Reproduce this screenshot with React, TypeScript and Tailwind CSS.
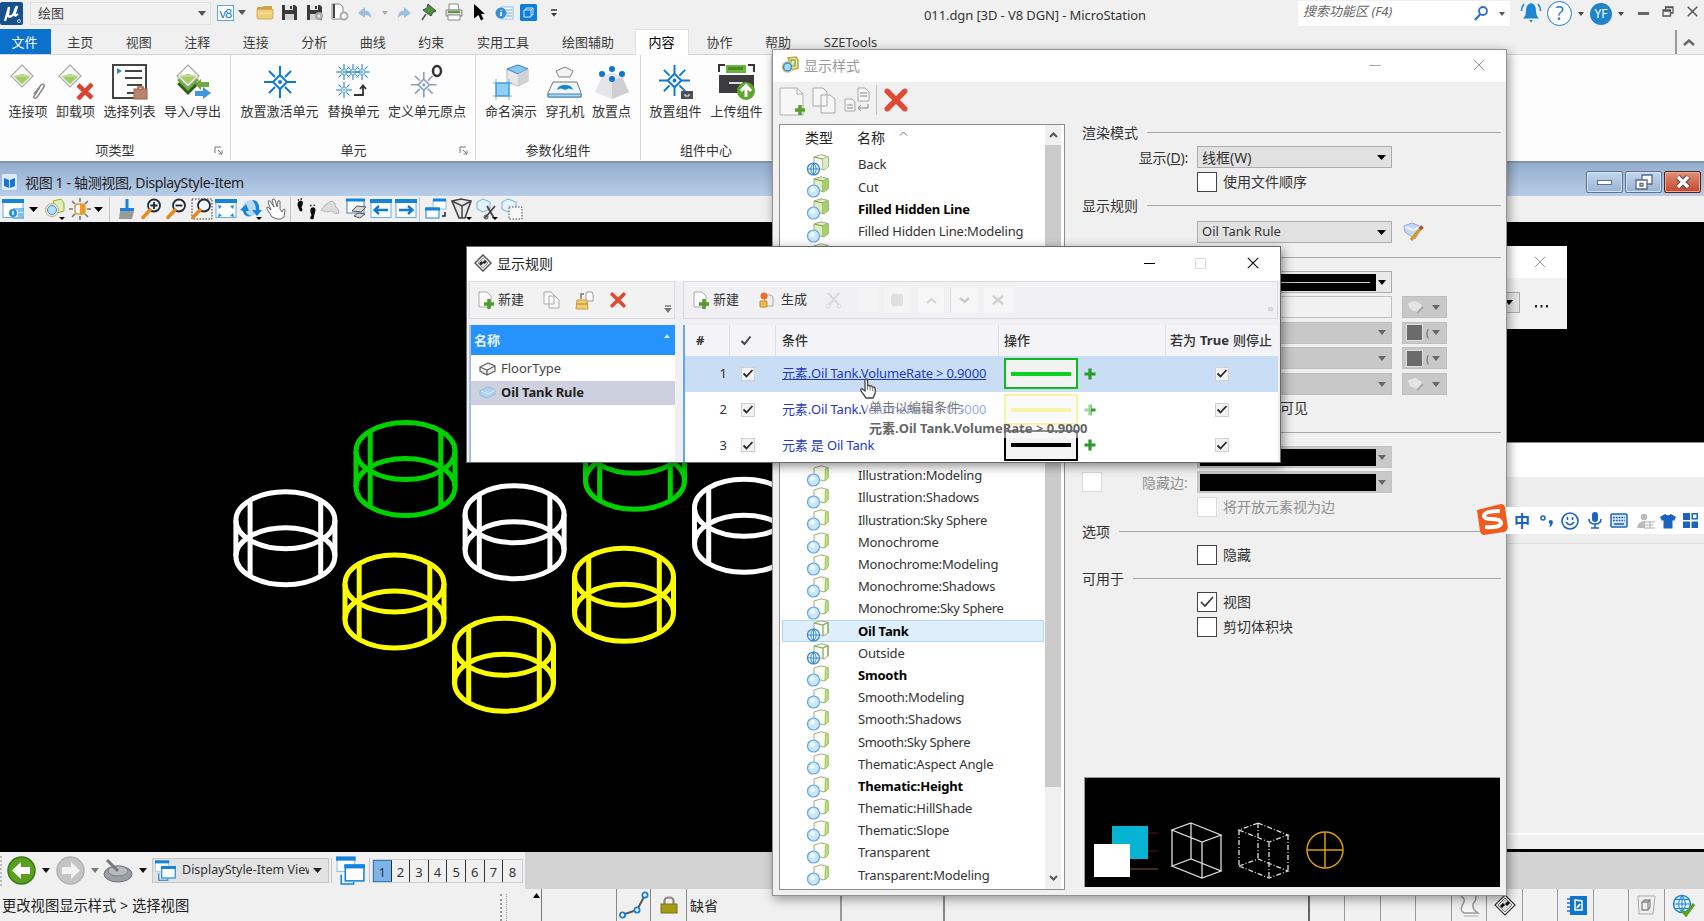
import React from 'react';

type Kids = { children?: React.ReactNode };

function Svg({ w, h, vb, c = '', children }: Kids & { w: number; h: number; vb?: string; c?: string }) {
  return (
    <svg width={w} height={h} viewBox={vb ?? `0 0 ${w} ${h}`} className={`block shrink-0 ${c}`} fill="none">
      {children}
    </svg>
  );
}

const Tri = ({ c = '', fill = '#555' }: { c?: string; fill?: string }) => (
  <Svg w={8} h={5} c={c}><path d="M0 0H8L4 5Z" fill={fill} /></Svg>
);

const TriBig = ({ c = '', fill = '#000' }: { c?: string; fill?: string }) => (
  <Svg w={9} h={5} c={c}><path d="M0 0H9L4.5 5Z" fill={fill} /></Svg>
);

const Close = ({ color, s = 12, c = '', sw = 1.2 }: { color: string; s?: number; c?: string; sw?: number }) => (
  <Svg w={s} h={s} vb="0 0 12 12" c={c}><path d="M.8 .8L11.2 11.2M11.2 .8L.8 11.2" stroke={color} strokeWidth={sw} /></Svg>
);

const RedX = ({ s, c = '' }: { s: number; c?: string }) => (
  <Svg w={s} h={s} vb="0 0 22 22" c={c}><path d="M3 3L19 19M19 3L3 19" stroke="#e04a34" strokeWidth="5" strokeLinecap="round" /></Svg>
);

/* ---------- Title bar ---------- */

const Floppy = ({ c = '', gear = false }: { c?: string; gear?: boolean }) => (
  <Svg w={17} h={17} c={c}>
    <path d="M1 1H14L16 3V16H1Z" fill="#3a3a3a" />
    <path d="M4 1H12V6H4Z" fill="#e8e8e8" />
    <path d="M4 10H13V16H4Z" fill="#d4d4d4" />
    <path d="M10 2V5" stroke="#3a3a3a" strokeWidth="2" />
    {gear && <><circle cx="13" cy="12" r="4" fill="#a8a8a8" /><circle cx="13" cy="12" r="1.5" fill="#eee" /></>}
  </Svg>
);

function TitleBar() {
  return (
    <div className="flex h-[29px] w-full items-start bg-[#f0f0f0]">
      <Svg w={23} h={23} c="mt-[2px]">
        <rect width="23" height="23" rx="2" fill="#17508c" />
        <path d="M5 19L9 5L8 12.500Q8 15 10.500 14.500Q13.500 14 15.500 7L17 4L14.600 12.500Q14.600 15 18 12" stroke="#fff" strokeWidth="2.300" />
        <circle cx="19" cy="19" r="1.500" stroke="#bcd7f0" />
      </Svg>
      <div className="ml-[7px] mt-[2px] flex h-[23px] w-[181px] items-center border border-[#e2e2e2] bg-[#f1f1f1] pl-[7px] text-[13px] text-[#444]">
        绘图<Tri c="ml-auto mr-[4px]" />
      </div>
      <div className="ml-[6px] mt-[5px] flex h-[16px] w-[17px] items-center justify-center border border-[#5aa7e4] bg-white text-[13px] leading-none tracking-[-1px] text-[#1a7fd4]">v8</div>
      <Tri c="ml-[4px] mt-[10px]" />
      <Svg w={18} h={15} c="ml-[10px] mt-[5px]">
        <path d="M1 3Q1 2 2 2H6L8 1H16V5H1Z" fill="#caa14c" /><path d="M1 4.500H17V12Q17 14 15.500 14H2.500Q1 14 1 12Z" fill="#efd07a" stroke="#d8ad4d" /><path d="M2 8H16" stroke="#f7e3a4" />
      </Svg>
      <Floppy c="ml-[7px] mt-[4px]" />
      <Floppy gear c="ml-[8px] mt-[4px]" />
      <Svg w={18} h={18} c="ml-[8px] mt-[3px]">
        <path d="M1 1H9L12 4V16H1Z" fill="#fff" stroke="#888" /><path d="M3 1V15" stroke="#444" strokeWidth="2" /><circle cx="13" cy="13" r="3.500" stroke="#aaa" strokeWidth="2" fill="#fff" />
      </Svg>
      <Svg w={14} h={12} c="ml-[9px] mt-[7px]"><path d="M0 6L7 0V3.500Q13 3.500 13 11Q11 8 7 8V11Z" fill="#9fbfdf" /></Svg>
      <Svg w={6} h={4} c="ml-[10px] mt-[11px]"><path d="M0 0H6L3 4Z" fill="#aaa" /></Svg>
      <Svg w={14} h={12} c="ml-[9px] mt-[7px]"><path d="M14 6L7 0V3.500Q1 3.500 1 11Q3 8 7 8V11Z" fill="#9fbfdf" /></Svg>
      <Svg w={16} h={18} c="ml-[10px] mt-[3px]">
        <path d="M7 1L15 8L12 9L10 13L2 7L6 5Z" fill="#4f8f3a" stroke="#3c4a3a" /><path d="M5 11L1 17" stroke="#555" strokeWidth="1.500" />
      </Svg>
      <Svg w={18} h={18} c="ml-[8px] mt-[3px]">
        <path d="M4 1H13L14 7H4Z" fill="#fff" stroke="#888" /><path d="M1 7H17V13H1Z" fill="#d8d8d8" stroke="#888" /><path d="M3 9H15" stroke="#5aa02c" strokeWidth="2" /><path d="M3 12H15V17H3Z" fill="#fff" stroke="#888" />
      </Svg>
      <Svg w={12} h={17} c="ml-[11px] mt-[4px]"><path d="M0 0L11 10H7L9.500 15L7 16.500L4.500 11L0 14.500Z" fill="#000" /></Svg>
      <Svg w={19} h={14} c="ml-[9px] mt-[6px]">
        <rect x="6" y="1" width="12" height="12" fill="#fff" stroke="#8dbfe8" /><path d="M11 4H17M11 7H17M11 10H17" stroke="#5aa0dc" /><circle cx="6" cy="7" r="5.500" fill="#3a8fd8" /><path d="M6 4V5M6 6V10" stroke="#fff" strokeWidth="1.600" />
      </Svg>
      <Svg w={17} h={17} c="ml-[6px] mt-[4px]">
        <rect width="17" height="17" rx="1.500" fill="#0f7edb" /><path d="M4 6H11V13H4ZM6 6V4H13V11H11M11 6L13 4" stroke="#cfe6fa" />
      </Svg>
      <Svg w={8} h={8} c="ml-[13px] mt-[9px]"><path d="M1 1H7" stroke="#333" strokeWidth="1.500" /><path d="M1 4H7L4 7.500Z" fill="#333" /></Svg>
      <div className="ml-[366px] mt-[4px] w-[232px] whitespace-nowrap text-[13px] leading-[22px] tracking-[-0.100px] text-[#333]">011.dgn [3D - V8 DGN] - MicroStation</div>
      <div className="ml-auto mt-[1px] flex h-[25px] w-[212px] items-center bg-white pl-[5px] text-[13px] italic text-[#666]">
        <span className="mb-[4px] whitespace-nowrap">搜索功能区 (F4)</span>
        <Svg w={14} h={15} c="ml-auto"><circle cx="9" cy="5" r="4" stroke="#2f6fc8" strokeWidth="1.800" /><path d="M6 8.500L1 14" stroke="#2f6fc8" strokeWidth="2.400" /></Svg>
        <Svg w={6} h={4} c="ml-[11px] mr-[5px]"><path d="M0 0H6L3 4Z" fill="#555" /></Svg>
      </div>
      <Svg w={22} h={21} c="ml-[10px] mt-[2px]">
        <path d="M11 1Q16 2 16 9Q16 14 19 16.500H3Q6 14 6 9Q6 2 11 1Z" fill="#1f86cf" /><path d="M9 18H13L11 20.500Z" fill="#1f86cf" /><path d="M4 2Q1.500 5 1.500 9M18 2Q20.500 5 20.500 9" stroke="#1f86cf" strokeWidth="1.600" />
      </Svg>
      <div className="ml-[5px] mt-[1px] flex h-[25px] w-[25px] items-center justify-center rounded-full border-[1.5px] border-[#1f80c8] bg-white text-[19px] leading-none text-[#1f80c8]">?</div>
      <Svg w={6} h={4} c="ml-[6px] mt-[12px]"><path d="M0 0H6L3 4Z" fill="#444" /></Svg>
      <div className="ml-[6px] mt-[3px] flex h-[22px] w-[22px] items-center justify-center rounded-full bg-[#1f84cc] text-[12px] leading-none text-white">YF</div>
      <Svg w={6} h={4} c="ml-[6px] mt-[12px]"><path d="M0 0H6L3 4Z" fill="#444" /></Svg>
      <div className="ml-[14px] mt-[12px] h-[3px] w-[11px] bg-[#666]" />
      <Svg w={12} h={11} c="ml-[13px] mt-[6px]"><path d="M1 4H8.500V10H1ZM1 5H8.500M3.500 4V1H11V7H8.500M3.500 1.500H11" stroke="#555" strokeWidth="1.300" /></Svg>
      <Close color="#555" s={11} sw={1.600} c="ml-[13px] mr-[6px] mt-[6px]" />
    </div>
  );
}

/* ---------- Ribbon ---------- */

const tabs: [string, string][] = [
  ['主页', 'w-[58.500px]'], ['视图', 'w-[58.500px]'], ['注释', 'w-[58.500px]'], ['连接', 'w-[58.500px]'],
  ['分析', 'w-[58.500px]'], ['曲线', 'w-[58.500px]'], ['约束', 'w-[58.500px]'], ['实用工具', 'w-[85px]'], ['绘图辅助', 'w-[85px]'],
];

function Tabs() {
  return (
    <div className="flex h-[26px] w-full items-stretch border-b border-[#d4d4d4] bg-[#f0f0f0] text-[13px] leading-[27px] text-[#3c3c3c]">
      <div className="w-[51px] bg-[#0a72cc] pr-[2px] text-center text-white">文件</div>
      {tabs.map(([t, w]) => <div key={t} className={`${w} text-center`}>{t}</div>)}
      <div className="-mb-px ml-[4px] w-[54px] border-x border-t border-[#e0e0e0] bg-white text-center leading-[25px] text-black">内容</div>
      <div className="ml-[2px] w-[58px] text-center">协作</div>
      <div className="w-[59px] text-center">帮助</div>
      <div className="w-[86px] text-center text-[13px]">SZETools</div>
      <div className="ml-auto mt-[1px] flex h-[24px] w-[29px] items-center justify-center border-l-2 border-[#999] pr-[4px]">
        <Svg w={12} h={7}><path d="M1 6L6 1.500L11 6" stroke="#666" strokeWidth="2.400" /></Svg>
      </div>
    </div>
  );
}

const Diamond = () => (
  <>
    <path d="M12 1L23 12L12 23L1 12Z" fill="#fbfbfb" stroke="#a8a8a8" strokeWidth="1.200" />
    <path d="M3.500 12L12 10L20.500 12L12 20.500Z" fill="#a3cd68" /><path d="M3.500 12H20.500" stroke="#d6e9b8" />
  </>
);

const Cell = ({ x = 0, y = 0, k = 1, color = '#0f7ad4' }: { x?: number; y?: number; k?: number; color?: string }) => (
  <g transform={`translate(${x} ${y}) scale(${k})`} stroke={color} strokeWidth={2}>
    <path d="M16 9L23 16L16 23L9 16Z" /><path d="M16 0V9M16 23V32M0 16H9M23 16H32M5 5L11 11M27 5L21 11M5 27L11 21M27 27L21 21" />
    <circle cx="16" cy="16" r="1" />
  </g>
);

function RBtn({ label, c, children }: Kids & { label: string; c: string }) {
  return (
    <div className={`flex flex-col items-center ${c}`}>
      <div className="flex h-[40px] items-center justify-center">{children}</div>
      <div className="whitespace-nowrap text-[13px] leading-[18px]">{label}</div>
    </div>
  );
}

function Group({ label, c, corner, children }: Kids & { label: string; c: string; corner?: boolean }) {
  return (
    <div className={`flex h-[105px] flex-col border-r border-[#d5d5d5] ${c}`}>
      <div className="flex pt-[7px]">{children}</div>
      <div className="mt-auto flex h-[18px] items-center text-[13px]">
        <div className="flex-1 pl-[12px] text-center">{label}</div>
        <div className="w-[16px]">
          {corner && <Svg w={9} h={9} c="-mt-[2px]"><path d="M1 7V1H7M4 4L8 8M8 4.500V8H4.500" stroke="#777" /></Svg>}
        </div>
      </div>
    </div>
  );
}

function Ribbon() {
  return (
    <div className="flex h-[108px] w-full border-b-2 border-[#8494a8] bg-[#fdfdfd] text-[#333]">
      <Group label="项类型" c="w-[231px] pl-[4px]" corner>
        <RBtn label="连接项" c="w-[48px]">
          <Svg w={36} h={36}><Diamond /><path d="M24 30L31 21Q34 19 34.500 22L28 32Q25 36 23.500 33L30 23" stroke="#8a8a8a" strokeWidth="1.500" /></Svg>
        </RBtn>
        <RBtn label="卸载项" c="w-[47px]">
          <Svg w={36} h={36}><Diamond /><path d="M20 21L34 34M34 20L20 35" stroke="#dc4232" strokeWidth="4.500" /></Svg>
        </RBtn>
        <RBtn label="选择列表" c="w-[61px]">
          <Svg w={36} h={36}>
            <rect x="1" y="1" width="33" height="33" fill="#fff" stroke="#444" strokeWidth="2" /><path d="M5 4L10 7L5 10Z" fill="#2f86d6" />
            <path d="M13 7H30M13 14H30M15 21H30M15 29H22" stroke="#444" strokeWidth="1.800" /><rect x="22" y="25" width="13" height="10" fill="#b98468" stroke="#99614a" /><path d="M26 25V23H31V25" stroke="#99614a" strokeWidth="1.500" />
          </Svg>
        </RBtn>
        <RBtn label="导入/导出" c="w-[65px]">
          <Svg w={36} h={36}>
            <path d="M2 20L13 31L24 20L13 12Z" fill="#315b1e" /><path d="M2 16L13 27L24 16L13 8Z" fill="#6fae35" /><g transform="translate(1 0)"><Diamond /></g>
            <path d="M20 20L26 15V18H34V23H26V26Z" fill="#70a840" /><path d="M36 29L28 23V27H20V32H28V35Z" fill="#3d96de" />
          </Svg>
        </RBtn>
      </Group>
      <Group label="单元" c="w-[245px] pl-[5px]" corner>
        <RBtn label="放置激活单元" c="w-[87px]"><Svg w={32} h={32}><Cell /></Svg></RBtn>
        <RBtn label="替换单元" c="w-[61px]">
          <Svg w={36} h={36}>
            <Cell x={0} y={0} k={0.5} /><Cell x={9} y={0} k={0.5} /><Cell x={18} y={0} k={0.5} /><Cell x={0} y={18} k={0.5} />
            <path d="M18 31H27V22M24 25L27 21.500L30 25" stroke="#333" strokeWidth="1.800" />
          </Svg>
        </RBtn>
        <RBtn label="定义单元原点" c="w-[86px]">
          <Svg w={36} h={36}><Cell x={2} y={8} k={0.8} color="#8d9dbe" /><ellipse cx="28" cy="7" rx="4" ry="5" stroke="#333" strokeWidth="2.500" /></Svg>
        </RBtn>
      </Group>
      <Group label="参数化组件" c="w-[165px] pl-[4px]">
        <RBtn label="命名演示" c="w-[62px]">
          <Svg w={36} h={36}>
            <path d="M14 5L25 1L35 5V17L25 22L14 18Z" fill="#e8e8ea" stroke="#b8b8b8" /><path d="M14 5L25 1L35 5L25 10Z" fill="#86c6f2" stroke="#3b86bd" /><path d="M25 10L35 5V17L25 22Z" fill="#d2d2d5" />
            <rect x="3" y="19" width="13" height="13" fill="#8fd0fa" stroke="#2f86c8" /><path d="M3 15V36M16 15V36M0 19H19M0 32H19" stroke="#4f9fd6" strokeWidth=".8" />
          </Svg>
        </RBtn>
        <RBtn label="穿孔机" c="w-[46px]">
          <Svg w={36} h={36}>
            <path d="M9 7L18 3L26 7L23 13H12Z" fill="#f4f4f4" stroke="#7c8288" /><path d="M6 18H30L34 29V33H1V29Z" fill="#f3f6f8" stroke="#6d7780" /><path d="M1 30H34V33H1Z" fill="#a9d6f5" stroke="#3a84ba" />
            <path d="M10 26Q11 21 18 21Q25 21 26 26Q22 23 18 26Q14 23 10 26Z" fill="#1684d4" />
          </Svg>
        </RBtn>
        <RBtn label="放置点" c="w-[47px]">
          <Svg w={36} h={36}>
            <path d="M8 13L18 8L28 13L35 28L18 35L1 28Z" fill="#e6e6e8" /><path d="M18 17L28 13L35 28L18 35Z" fill="#cfcfd2" />
            <g fill="#0e76d0"><circle cx="18" cy="5" r="3" /><circle cx="8" cy="10" r="3" /><circle cx="28" cy="10" r="3" /><circle cx="18" cy="15" r="3" /></g>
          </Svg>
        </RBtn>
      </Group>
      <Group label="组件中心" c="w-[131px] pl-[4px]">
        <RBtn label="放置组件" c="w-[61px]">
          <Svg w={36} h={36}><Cell x={1} y={1} k={0.97} /><rect x="23" y="27" width="12" height="8" fill="#4a4f58" /><path d="M27 30V32H31V30" stroke="#fff" /></Svg>
        </RBtn>
        <RBtn label="上传组件" c="w-[61px]">
          <Svg w={37} h={37}>
            <path d="M1 8V1H7M30 1H36V8" stroke="#333" strokeWidth="2" /><path d="M8 1H28V9H8Z" fill="#6db33f" /><path d="M10 3H25V6H10Z" fill="#4b8a28" />
            <path d="M1 11H36V29H1Z" fill="#3c3c3e" /><path d="M11 19H24L26 22" stroke="#ddd" strokeWidth="1.800" />
            <circle cx="28" cy="27" r="9" fill="#5fa52a" /><path d="M28 33V22M23 27L28 21.500L33 27" stroke="#fff" strokeWidth="3" />
          </Svg>
        </RBtn>
      </Group>
    </div>
  );
}

/* ---------- 3D view ---------- */

const Win = ({ children }: Kids) => (
  <><rect x="1" y="1.500" width="20" height="18" fill="#fff" stroke="#64ace6" /><path d="M0 1H22V5H0Z" fill="#1384dd" />{children}</>
);

const Mag = ({ sign }: { sign: string }) => (
  <><circle cx="13" cy="7.500" r="6" fill="#f2f6fa" stroke="#222b38" strokeWidth="1.800" /><path d="M9 12L2 19.500" stroke="#e38b25" strokeWidth="3.500" strokeLinecap="round" /><path d={sign} stroke="#222" strokeWidth="1.800" /></>
);

const Sep = ({ c }: { c: string }) => <div className={`h-[25px] w-px shrink-0 bg-[#c4c4c4] ${c}`} />;

function ViewTools() {
  return (
    <div className="flex h-[26px] w-full items-center bg-[#f0f0f0]">
      <Svg w={22} h={22} c="ml-[2px]"><Win><path d="M11 11H22V20H11Z" fill="#e5f3fd" stroke="#1f86d8" /><path d="M16 13H21M16 16H21M16 18H21" stroke="#1f86d8" /><circle cx="11" cy="15" r="4" fill="#2e90dd" /><path d="M11 13V17" stroke="#fff" strokeWidth="1.500" /></Win></Svg>
      <TriBig c="ml-[5px]" />
      <Svg w={22} h={22} c="ml-[6px]"><path d="M9 3L17 1L20 5V13L13 15Z" fill="#e2eeb9" stroke="#85b52c" /><circle cx="8" cy="12" r="6.500" fill="#dff2ff" stroke="#e0a352" /><circle cx="8" cy="12" r="4.500" fill="#b5defa" stroke="#3b8fd2" /><path d="M15 19H21L18 22Z" fill="#000" /></Svg>
      <Svg w={22} h={22} c="ml-[3px]"><rect x="6" y="6" width="10" height="10" rx="3" fill="#fff" stroke="#d89a44" strokeWidth="1.500" /><path d="M11 6H16V15L11 17Z" fill="#f29a1f" /><path d="M11 0V4M11 18V22M0 11H4M18 11H22M3 3L6 6M19 3L16 6M3 19L6 16M19 19L16 16" stroke="#777" strokeWidth="1.600" /></Svg>
      <TriBig c="ml-[3px]" />
      <Sep c="ml-[6px]" />
      <Svg w={18} h={22} c="ml-[8px]"><path d="M9 1V11M2 11.500H16" stroke="#1684dc" strokeWidth="3" /><path d="M2 13H16L14 21H1Z" fill="#9a9a9a" /></Svg>
      <Svg w={22} h={22} c="ml-[5px]"><Mag sign="M9.500 7.500H16.500M13 4V11" /></Svg>
      <Svg w={22} h={22} c="ml-[3px]"><Mag sign="M9.500 7.500H16.500" /></Svg>
      <Svg w={22} h={22} c="ml-[3px]"><rect x="1" y="1" width="20" height="20" stroke="#333" strokeDasharray="1.500 1.500" /><Mag sign="M0 0" /></Svg>
      <Svg w={22} h={22} c="ml-[2px]"><Win><path d="M3 7L7 8L4 11ZM19 7L15 8L18 11ZM3 19L7 18L4 15ZM19 19L15 18L18 15Z" fill="#2a8ad8" /></Win></Svg>
      <Svg w={22} h={22} c="ml-[3px]"><circle cx="11" cy="10" r="8" fill="#b9d9f3" /><path d="M0 12L6 6L9 13H6Q6 17 12 18Q4 20 3 13ZM12 2Q20 2 19 12H22L17 18L12 12H16Q16 6 12 2Z" fill="#1584dc" /><path d="M16 19H22L19 22Z" fill="#000" /></Svg>
      <Svg w={22} h={22} c="ml-[3px]"><path d="M7 19L2 11Q1 9 3 9L6 12L3 4Q3 2 5 3L9 9L7 2Q8 0 10 2L12 9L13 3Q15 2 15 4V11L17 14Q19 9 20 12L19 19Q16 22 12 21Z" fill="#fff" stroke="#666" /></Svg>
      <Sep c="ml-[3px]" />
      <Svg w={24} h={22} c="ml-[3px]">
        <path d="M4 4Q7 1 9 4Q9 7 7.500 9L8.500 12Q7.500 14.500 5.500 12.500L4 9Q3 7 4 4ZM17 10Q20 8 21.500 11Q21.500 14 20.500 16L19.500 21Q17 22 16 20L17.500 17Q15.500 13 17 10Z" fill="#0a0a0a" />
        <path d="M4 2.500L5 1.500M6.500 1H8M16 8L17.500 7M19.500 7L21 7.500" stroke="#0a0a0a" strokeWidth="1.300" />
      </Svg>
      <Svg w={22} h={22} c="ml-[2px]"><path d="M1 12Q5 6 11 3Q16 4 15 8Q19 10 19 15Q15 17 12 13Q6 15 1 12Z" fill="#dcdcdc" stroke="#b4b4b4" /></Svg>
      <Svg w={22} h={22} c="ml-[3px]"><rect x="2" y="2" width="17" height="13" fill="#fff" stroke="#3d7fc0" /><path d="M1 2H20" stroke="#1384dd" strokeWidth="3" /><path d="M7 13L12 8L21 9L16 14ZM9 18L13 15L20 16L15 20Z" fill="#d8d8d8" stroke="#555" /></Svg>
      <Svg w={22} h={22} c="ml-[3px]"><Win><path d="M4 12H18M9 8L4.500 12L9 16" stroke="#0f7ad4" strokeWidth="2.400" /></Win></Svg>
      <Svg w={22} h={22} c="ml-[3px]"><Win><path d="M4 12H18M13 8L17.500 12L13 16" stroke="#0f7ad4" strokeWidth="2.400" /></Win></Svg>
      <Sep c="ml-[2px]" />
      <Svg w={22} h={22} c="ml-[5px]"><rect x="8" y="2" width="13" height="9" fill="#fff" stroke="#8cc4ef" /><path d="M8 2H21" stroke="#1384dd" strokeWidth="3" /><rect x="1" y="10" width="13" height="10" fill="#fff" stroke="#1384dd" /><path d="M0 11H15" stroke="#1384dd" strokeWidth="3" /><path d="M20 14V18H17" stroke="#222" strokeWidth="1.500" /></Svg>
      <Svg w={22} h={22} c="ml-[4px]"><path d="M1 3L10 1L20 3L14 20H8Z" fill="#e8e8e8" stroke="#444" strokeWidth="1.600" /><path d="M1 3L11 8L20 3M11 8V20" stroke="#444" strokeWidth="1.500" /><path d="M15 19H21L18 22Z" fill="#000" /></Svg>
      <Svg w={22} h={22} c="ml-[3px]"><path d="M1 4L7 1L14 4V11L7 14L1 11Z" fill="#e6f3fc" stroke="#6fb1e2" /><path d="M9 20L19 8M11 8L18 20" stroke="#444" strokeWidth="1.800" /><circle cx="10" cy="19" r="2" stroke="#444" /><path d="M16 19H22L19 22Z" fill="#000" /></Svg>
      <Svg w={22} h={22} c="ml-[3px]"><path d="M1 4L7 1L15 4V11L7 14L1 11Z" fill="#e6f3fc" stroke="#6fb1e2" /><rect x="8" y="9" width="13" height="12" fill="#f6f6f6" stroke="#444" strokeDasharray="1.500 1.500" /></Svg>
    </div>
  );
}

const tanks: [number, number, string][] = [
  [405.500, 247, '#00d200'], [635, 240.800, '#00d200'], [285.400, 316.300, '#fff'], [514.600, 310.200, '#fff'],
  [744, 303.800, '#fff'], [394.500, 379.500, '#fafa00'], [624, 372.800, '#fafa00'], [504, 442.700, '#fafa00'],
];

function View() {
  return (
    <div className="flex w-full flex-col">
      <div className="flex h-[33px] w-full items-center bg-linear-to-b from-[#94aece] to-[#b7cde8] text-[14px] text-[#222]">
        <Svg w={15} h={16} c="ml-[2px] mt-[5px]"><rect width="15" height="16" rx="2" fill="#dbe9f8" /><path d="M2 4L7 6V14L2 12ZM8 6L13 4V12L8 14Z" fill="#1677d2" /></Svg>
        <div className="ml-[8px] mt-[6px] whitespace-nowrap text-[14px] tracking-[-0.350px]">视图 1 - 轴测视图, DisplayStyle-Item</div>
        <div className="ml-auto mr-[3px] mt-[5px] flex gap-[2px]">
          <div className="flex h-[22px] w-[37px] items-center justify-center rounded-[2px] border border-[#5d7390] bg-linear-to-b from-[#c3d6ec] to-[#98b4d6] shadow-[inset_0_0_0_1px_#d5e2f1]">
            <div className="h-[5px] w-[15px] border border-[#5c6f88] bg-white" />
          </div>
          <div className="flex h-[22px] w-[37px] items-center justify-center rounded-[2px] border border-[#5d7390] bg-linear-to-b from-[#c3d6ec] to-[#98b4d6] shadow-[inset_0_0_0_1px_#d5e2f1]">
            <Svg w={18} h={16}><path d="M7 1H17V10H7Z" fill="#fff" stroke="#56687f" strokeWidth="1.300" /><path d="M1 6H12V15H1Z" fill="#fff" stroke="#56687f" strokeWidth="1.300" /><path d="M5 9.500H8V12H5Z" stroke="#56687f" strokeWidth="1.300" /></Svg>
          </div>
          <div className="flex h-[22px] w-[37px] items-center justify-center rounded-[2px] border border-[#53241b] bg-linear-to-b from-[#dd9078] to-[#c4452a] shadow-[inset_0_0_0_1px_#e9ab98]">
            <Svg w={16} h={14}><path d="M3 2L13 12M13 2L3 12" stroke="#5b4a48" strokeWidth="5.500" /><path d="M3 2L13 12M13 2L3 12" stroke="#fff" strokeWidth="3.200" /></Svg>
          </div>
        </div>
      </div>
      <ViewTools />
      <div className="h-[630px] w-full bg-black">
        <Svg w={773} h={630}>
          {tanks.map(([x, y, color]) => (
            <g key={`${x}`} transform={`translate(${x} ${y})`} stroke={color} strokeWidth="5">
              <ellipse cy="-18" rx="49.500" ry="28.500" /><ellipse cy="18" rx="49.500" ry="28.500" />
              <path d="M-49.500 -18V18M49.500 -18V18M-35.300 -38V38M35.300 -38V38" />
            </g>
          ))}
        </Svg>
      </div>
    </div>
  );
}

/* ---------- Bottom bars ---------- */

const Wins = ({ s }: { s: number }) => (
  <Svg w={s} h={s} vb="0 0 28 28">
    <rect x="1" y="1" width="17" height="14" fill="#fff" stroke="#8cc4ef" /><path d="M0 2.500H19" stroke="#1384dd" strokeWidth="4" />
    <rect x="9" y="9" width="18" height="15" fill="#fff" stroke="#1384dd" strokeWidth="1.500" /><path d="M8 10H28" stroke="#1384dd" strokeWidth="4" /><path d="M5 18V27H17V25" stroke="#1384dd" strokeWidth="1.500" />
  </Svg>
);

function NavBar() {
  return (
    <div className="flex h-[37px] w-full bg-[#d3d3d4]">
      <div className="flex h-full w-[525px] items-center bg-[#f0f0f0] text-[13px] text-[#333]">
        <div className="h-[30px] border-l-2 border-dotted border-[#bbb]" />
        <Svg w={29} h={29} c="ml-[5px]"><circle cx="14.500" cy="14.500" r="13.500" fill="#58a01d" stroke="#38761a" strokeWidth="1.500" /><path d="M5 14.500L14 6V11H23V18H14V23Z" fill="#fff" /></Svg>
        <Tri c="ml-[6px]" fill="#111" />
        <Svg w={29} h={29} c="ml-[6px]"><circle cx="14.500" cy="14.500" r="13.500" fill="#c4c4c4" stroke="#b2b2b2" strokeWidth="1.500" /><path d="M24 14.500L15 6V11H6V18H15V23Z" fill="#f2f2f2" /></Svg>
        <Tri c="ml-[6px]" fill="#777" />
        <Svg w={30} h={24} c="ml-[4px]"><ellipse cx="15" cy="15" rx="14" ry="8" fill="#9a9fa6" stroke="#6e737a" /><ellipse cx="15" cy="12" rx="10" ry="5" fill="#b7bcc2" stroke="#7b8087" /><path d="M4 1L15 12" stroke="#777" strokeWidth="3" /></Svg>
        <Tri c="ml-[6px]" fill="#111" />
        <div className="ml-[5px] flex h-[25px] w-[177px] items-center border border-[#c6c6c6] bg-[#e2e2e2] pl-[2px]">
          <Wins s={21} />
          <div className="ml-[6px] w-[127px] overflow-hidden whitespace-nowrap text-[12.500px]">DisplayStyle-Item View</div>
          <TriBig c="ml-auto mr-[6px]" fill="#222" />
        </div>
        <Sep c="ml-[2px]" />
        <div className="ml-[4px]"><Wins s={29} /></div>
        <Sep c="ml-[4px]" />
        <div className="ml-[2px] flex h-[24px] border border-[#ccc] text-[13px] leading-[24px]">
          {['1', '2', '3', '4', '5', '6', '7', '8'].map((n) => (
            <div key={n} className={`w-[18.600px] text-center ${n === '1' ? 'border border-[#3f78b4] bg-[#7cb3e8] leading-[22px]' : ''} ${n === '8' ? '' : 'border-r border-r-[#333]'}`}>{n}</div>
          ))}
        </div>
      </div>
    </div>
  );
}

function StatusBar() {
  return (
    <div className="flex h-[32px] w-full items-stretch bg-[#f0f0f0] text-[13px] text-[#222]">
      <div className="w-[500px] whitespace-nowrap pl-[2px] text-[14.300px] leading-[34px]">更改视图显示样式 &gt; 选择视图</div>
      <div className="mt-[5px] w-[7px] border-l-2 border-r border-dotted border-l-[#999] border-r-[#999]" />
      <div className="flex w-[35px] justify-end border-r border-[#777] pt-[4px]"><Svg w={7} h={5} c="mr-px"><path d="M0 5H7L3.500 0Z" fill="#000" /></Svg></div>
      <div className="w-[75px] border-r border-[#888]" />
      <div className="flex w-[34px] items-center justify-center border-r border-[#888]">
        <Svg w={30} h={28}><path d="M3 24L18 19L26 4" stroke="#555" strokeWidth="2" /><g fill="#fff" stroke="#1a80d4" strokeWidth="1.800"><circle cx="3.500" cy="24" r="2.600" /><circle cx="18" cy="19" r="2.600" /><circle cx="26" cy="4" r="2.600" /></g></Svg>
      </div>
      <div className="flex w-[36px] items-center justify-center border-r border-[#888]">
        <Svg w={18} h={18}><path d="M4.500 9V5Q4.500 1.500 9 1.500Q13.500 1.500 13.500 5V9" stroke="#888" strokeWidth="2.200" /><rect x="1" y="8" width="16" height="9" fill="#a79a14" stroke="#7c730e" /></Svg>
      </div>
      <div className="pl-[3px] text-[14px] leading-[34px]">缺省</div>
      <div className="ml-auto flex">
        <div className="w-[105px] border-l-2 border-r-2 border-l-[#999] border-r-[#888]" />
        <div className="w-[363px]" />
        <div className="w-[36px] border-l-2 border-[#666]" />
        <div className="w-[36px] border-l border-[#999]" />
        <div className="w-[35px] border-l border-[#999]" />
        <div className="w-[36px] border-l border-[#999]" />
        <div className="flex w-[35px] items-center justify-center border-l border-[#999]">
          <Svg w={22} h={24}><path d="M2 1H17Q20 5 15 11Q14 16 20 20H6Q1 17 5 11Q8 6 4 4Z" fill="#f6f6f6" stroke="#999" strokeWidth="1.500" /><path d="M6 23H20" stroke="#aaa" /></Svg>
        </div>
        <div className="flex w-[36px] items-center justify-center border-l border-[#999]">
          <Svg w={22} h={22}><path d="M11 1L21 11L11 21L1 11Z" fill="#fff" stroke="#333" strokeWidth="1.200" /><path d="M11 4L18 11L11 18L4 11Z" fill="#ddd" stroke="#777" /><path d="M7 13L10 10M12 11L15 8" stroke="#111" strokeWidth="3" /></Svg>
        </div>
        <div className="w-[35px] border-l border-[#999]" />
        <div className="flex w-[36px] items-center justify-center border-l border-[#999] pl-[4px]">
          <Svg w={21} h={21}><rect x="3" y="1" width="17" height="19" fill="#0e74cc" /><path d="M0 4H6M0 8H6M0 12H6M0 16H6" stroke="#0e74cc" strokeWidth="1.500" /><path d="M8 5L15 6V15H8Z" stroke="#fff" strokeWidth="1.500" /><path d="M10 13L13 9" stroke="#fff" strokeWidth="2" /></Svg>
        </div>
        <div className="w-[35px] border-l border-[#999]" />
        <div className="flex w-[36px] items-center justify-center border-l border-[#999]">
          <Svg w={19} h={20}><path d="M1 1H18L16 19H2Z" fill="#eee" stroke="#aaa" /><path d="M5 7L8 5H13V12L11 15H5ZM5 7H11V15M11 7L13 5" stroke="#888" strokeWidth="1.300" /></Svg>
        </div>
        <div className="flex w-[40px] items-center border-l border-[#999] pl-[7px]">
          <Svg w={23} h={23}><circle cx="10" cy="10" r="8.500" fill="#e5f3fd" stroke="#1a82d4" strokeWidth="1.500" /><path d="M1.500 10H18.500M10 1.500V18.500M3 5.500H17M3 14.500H17M10 1.500Q3 10 10 18.500M10 1.500Q17 10 10 18.500" stroke="#1a82d4" /><path d="M10 16L14 21L22 10" stroke="#5a9f1f" strokeWidth="3" /></Svg>
        </div>
      </div>
    </div>
  );
}

/* ---------- Display style dialog ---------- */

type Kind = 'globe' | 'green' | 'wire' | 'plain';

const StyleIcon = ({ kind }: { kind: Kind }) => (
  <Svg w={22} h={22}>
    <path d="M7 3L14 .8L21 2.500V13L17 16L7 13Z" fill={kind === 'green' ? '#e0edc0' : '#fbfdf4'} stroke="#a0aa86" />
    {kind === 'plain' ? <path d="M18.500 3.500L21 2.500V13L18 15.500Z" fill="#c6e59b" stroke="#92c43e" /> : <path d="M7 3L16 5L21 2.500M16 5V15.500M21 2.500V13" stroke="#83a94f" strokeWidth="1.200" />}
    {kind === 'green' && <path d="M16 5L21 2.500V13L16 15.500Z" fill="#a7cf6c" />}
    {kind === 'globe' && <path d="M16 5L21 2.500V13L16 15.500Z" fill="#dcebc2" />}
    <circle cx="6.500" cy="15" r="6" fill={kind === 'globe' || kind === 'wire' ? '#eaf5fe' : '#c8e7fd'} stroke={kind === 'globe' || kind === 'wire' ? '#2f86d2' : '#68a6dd'} strokeWidth="1.200" />
    {kind === 'globe' || kind === 'wire'
      ? <path d="M.5 15H12.500M6.500 9V21M6.500 9Q1 15 6.500 21M6.500 9Q12 15 6.500 21" stroke="#2c83cf" strokeWidth=".9" />
      : <circle cx="5.500" cy="13.500" r="2.500" fill="#edf8ff" />}
  </Svg>
);

const top: [string, Kind, boolean?][] = [
  ['Back', 'globe'], ['Cut', 'green'], ['Filled Hidden Line', 'green', true], ['Filled Hidden Line:Modeling', 'green'], ['', 'green'],
];
const rest: [string, Kind, boolean?][] = [
  ['Illustration:Modeling', 'plain'], ['Illustration:Shadows', 'plain'], ['Illustration:Sky Sphere', 'plain'], ['Monochrome', 'plain'],
  ['Monochrome:Modeling', 'plain'], ['Monochrome:Shadows', 'plain'], ['Monochrome:Sky Sphere', 'plain'], ['Oil Tank', 'wire', true],
  ['Outside', 'wire'], ['Smooth', 'plain', true], ['Smooth:Modeling', 'plain'], ['Smooth:Shadows', 'plain'], ['Smooth:Sky Sphere', 'plain'],
  ['Thematic:Aspect Angle', 'plain'], ['Thematic:Height', 'plain', true], ['Thematic:HillShade', 'plain'], ['Thematic:Slope', 'plain'],
  ['Transparent', 'plain'], ['Transparent:Modeling', 'plain'],
];

const spacing = (name: string, bold?: boolean) => {
  if (bold) return 'tracking-[-0.200px]';
  if (name.includes('Sky')) return 'tracking-[-0.350px]';
  return 'tracking-[-0.170px]';
};

const Row = ({ r: [name, kind, bold] }: { r: [string, Kind, boolean?] }) => (
  <div className={`ml-[2px] flex h-[22.200px] w-[262px] shrink-0 items-center border pl-[24px] ${name === 'Oil Tank' ? 'border-[#b4d6f3] bg-[#deeffb]' : 'border-transparent'}`}>
    <StyleIcon kind={kind} />
    <span className={`ml-[29px] whitespace-nowrap text-[13px] ${spacing(name, bold)} ${bold ? 'font-bold text-black' : 'text-[#333]'}`}>{name}</span>
  </div>
);

const Head = ({ t, c }: { t: string; c: string }) => (
  <div className={`flex h-[20px] shrink-0 items-center text-[14px] text-[#333] ${c}`}>
    {t}<div className="ml-[9px] h-px flex-1 bg-[#a8a8a8]" />
  </div>
);

const Box = ({ on, dis, c = '' }: { on?: boolean; dis?: boolean; c?: string }) => (
  <div className={`flex h-[20px] w-[20px] shrink-0 items-center justify-center border bg-white ${dis ? 'border-[#dcdcdc]' : 'border-[#444]'} ${c}`}>
    {on && <Svg w={16} h={14}><path d="M2 7L6 11L14 2" stroke="#333" strokeWidth="1.600" /></Svg>}
  </div>
);

const BlackSel = ({ c, dis }: { c: string; dis?: boolean }) => (
  <div className={`flex h-[22px] w-[195px] shrink-0 items-center border p-[2px] ${dis ? 'border-[#c4c4c4] bg-[#c9c9c9]' : 'border-[#adadad] bg-[#e9e9e9]'} ${c}`}>
    <div className="flex h-[17px] w-[176px] items-center bg-black px-[6px]">{!dis && <div className="h-px w-full bg-[#ccc]" />}</div>
    <Tri c="ml-[2px]" fill={dis ? '#666' : '#000'} />
  </div>
);

const SideBtn = ({ swatch }: { swatch?: boolean }) => (
  <div className="ml-[10px] flex h-[22px] w-[45px] items-center border border-[#bebebe] bg-[#c8c8c8] pl-[3px]">
    {swatch
      ? <><div className="h-[17px] w-[17px] border border-[#ddd] bg-[#6b6b6b]" /><span className="ml-[3px] text-[11px] leading-none text-[#666]">(</span></>
      : <Svg w={20} h={18}><path d="M1 5L9 2L17 7L12 15L4 12Z" fill="#e4e4e4" stroke="#c4c4c4" /><path d="M11 15L17 9" stroke="#aaa" strokeWidth="2" /></Svg>}
    <Tri c="ml-auto mr-[6px]" fill="#666" />
  </div>
);

function StyleForm() {
  return (
    <div className="flex w-[419px] flex-col pt-[40px] text-[14px] text-[#333]">
      <Head t="渲染模式" c="" />
      <div className="mt-[4px] flex h-[22px] items-center">
        <div className="w-[106px] text-right tracking-[-0.200px]">显示(<u>D</u>):</div>
        <div className="ml-[9px] flex h-[22px] w-[195px] items-center border border-[#adadad] bg-[#e1e1e1] pl-[4px]">线框(W)<TriBig c="ml-auto mr-[5px]" /></div>
      </div>
      <div className="mt-[3px] flex h-[21px] items-center pl-[115px]"><Box /><span className="ml-[6px]">使用文件顺序</span></div>
      <Head t="显示规则" c="mt-[3px]" />
      <div className="mt-[6px] flex h-[22px] items-center pl-[115px]">
        <div className="flex h-[22px] w-[195px] items-center border border-[#adadad] bg-[#e1e1e1] pl-[4px] text-[13px]">Oil Tank Rule<TriBig c="ml-auto mr-[5px]" /></div>
        <Svg w={21} h={21} c="ml-[11px]"><path d="M1 4L9 1L19 5L12 17L2 10Z" fill="#c2d8f3" stroke="#8daad2" /><path d="M2 5L10 8L18 5" stroke="#eef5fd" strokeWidth="2" /><path d="M8 18L18 6" stroke="#d69a2a" strokeWidth="3.500" /><path d="M17 7L19.500 4.500" stroke="#b4453a" strokeWidth="3.500" /></Svg>
      </div>
      <div className="mt-[14px] h-px shrink-0 bg-[#a8a8a8]" />
      <BlackSel c="ml-[115px] mt-[13px]" />
      <div className="mt-[3px] flex pl-[115px]"><div className="h-[22px] w-[195px] border border-[#c0c0c0] bg-[#f1f1f1]" /><SideBtn /></div>
      {[true, true, false].map((s, i) => (
        <div key={i} className="mt-[3.700px] flex pl-[115px]"><div className="flex h-[22px] w-[195px] items-center border border-[#bebebe] bg-[#c8c8c8]"><Tri c="ml-auto mr-[5px]" fill="#666" /></div><SideBtn swatch={s} /></div>
      ))}
      <div className="mt-[3px] h-[20px] pl-[198px] leading-[20px]">可见</div>
      <div className="mt-[14px] h-px shrink-0 bg-[#a8a8a8]" />
      <BlackSel dis c="ml-[115px] mt-[13px]" />
      <div className="mt-[3px] flex items-center">
        <Box dis /><span className="ml-[40px] w-[46px] whitespace-nowrap text-[#909090]">隐藏边:</span><BlackSel dis c="ml-[9px]" />
      </div>
      <div className="mt-[3px] flex h-[21px] items-center pl-[115px] text-[#909090]"><Box dis /><span className="ml-[6px]">将开放元素视为边</span></div>
      <Head t="选项" c="mt-[4px]" />
      <div className="mt-[3px] flex h-[21px] items-center pl-[115px]"><Box /><span className="ml-[6px]">隐藏</span></div>
      <Head t="可用于" c="mt-[3px]" />
      <div className="mt-[3px] flex h-[21px] items-center pl-[115px]"><Box on /><span className="ml-[6px]">视图</span></div>
      <div className="mt-[4px] flex h-[21px] items-center pl-[115px]"><Box /><span className="ml-[6px]">剪切体积块</span></div>
      <div className="ml-[2px] mt-[140px] h-[110px] w-[416px] shrink-0 border-l border-t border-[#999] bg-black">
        <Svg w={414} h={108}>
          <path d="M40 55H73M40 73H73" stroke="#4a1c1c" /><path d="M40 91H73" stroke="#8a5238" />
          <rect x="27" y="48" width="36" height="33" fill="#04b4d2" /><rect x="9" y="66" width="36" height="33" fill="#fff" />
          <g stroke="#ddd" strokeWidth="1.300">
            <path d="M106 45L136 57L117 64L87 52ZM87 88L106 81L136 93L117 100ZM106 45V81M136 57V93M117 64V100M87 52V88" />
            <path strokeDasharray="5 2 1 2" d="M173 45L203 57L184 64L154 52ZM154 88L173 81L203 93L184 100ZM173 45V81M203 57V93M184 64V100M154 52V88" />
          </g>
          <g stroke="#dd9d0c" strokeWidth="1.500"><circle cx="240" cy="72" r="18" /><path d="M222 72H258M240 54V90" /></g>
        </Svg>
      </div>
    </div>
  );
}

function StyleDialog() {
  return (
    <div className="absolute left-[772px] top-[49px] flex h-[847px] w-[735px] flex-col border border-[#929292] bg-[#f0f0f0] shadow-[2px_3px_10px_rgba(0,0,0,0.4)]">
      <div className="flex h-[32px] shrink-0 items-center bg-white pb-[2px] text-[14px] text-[#999]">
        <Svg w={18} h={18} c="ml-[8px]"><path d="M7 2L15 1L17 4V12L11 14Z" fill="#ddeec0" stroke="#c9a23b" strokeWidth="1.500" /><path d="M10 4H14V10H10Z" stroke="#8fb23b" strokeWidth="1.500" /><circle cx="6.500" cy="11" r="6" fill="#f2c87a" /><circle cx="6.500" cy="11" r="4" fill="#a4dbfa" stroke="#2f8fd6" strokeWidth="1.500" /></Svg>
        <span className="ml-[5px]">显示样式</span>
        <div className="ml-auto mr-[92px] h-px w-[12px] bg-[#aaa]" />
        <Close color="#999" s={12} sw={1} c="mr-[21px]" />
      </div>
      <div className="flex h-0 flex-1">
        <div className="flex w-[309px] flex-col pl-[6px]">
          <div className="flex h-[42px] shrink-0 items-center pb-[6px]">
            <Svg w={27} h={29} c="mt-[2px]"><path d="M1 1H18L24 7V28H1Z" fill="#f7f7f7" stroke="#b0b0b0" /><path d="M18 1V7H24" stroke="#b0b0b0" /><path d="M21 18V28M16 23H26" stroke="#5a9e2c" strokeWidth="3.500" /></Svg>
            <Svg w={25} h={27} c="ml-[6px]"><path d="M1 1H11L15 5V19H1ZM9 8H18L23 12V26H9Z" fill="#f6f6f6" stroke="#a8a8a8" /></Svg>
            <Svg w={26} h={26} c="ml-[7px]"><path d="M14 1H21L25 5V14H14ZM1 12H8L11 15V24H1Z" fill="#f6f6f6" stroke="#a8a8a8" /><path d="M16 6H23M16 9H23M3 18H9M3 21H9M24 17V21H14M17 18L14 21L17 24" stroke="#888" /></Svg>
            <div className="ml-[6px] h-[30px] w-px bg-[#c0c0c0]" />
            <RedX s={24} c="ml-[7px]" />
          </div>
          <div className="flex h-[766px] w-[286px] border border-[#8e8e8e] bg-white">
            <div className="flex w-[265px] flex-col">
              <div className="flex h-[29px] shrink-0 items-center pb-[4px] pl-[25px] text-[14px] text-[#222]">
                <span>类型</span><span className="ml-[24px]">名称</span><Svg w={9} h={5} c="mb-[8px] ml-[14px]"><path d="M1 4.500L4.500 1L8 4.500" stroke="#777" /></Svg>
              </div>
              {top.map((r) => <Row key={r[0]} r={r} />)}
              <div className="h-[200px] shrink-0" />
              {rest.map((r) => <Row key={r[0]} r={r} />)}
            </div>
            <div className="flex w-[16px] flex-col items-center bg-[#f0f0f0]">
              <Svg w={9} h={6} c="my-[7px]"><path d="M1 5L4.500 1.500L8 5" stroke="#555" strokeWidth="2" /></Svg>
              <div className="h-[642px] w-full bg-[#cbcbcb]" />
              <Svg w={9} h={6} c="mb-[8px] mt-auto"><path d="M1 1L4.500 4.500L8 1" stroke="#555" strokeWidth="2" /></Svg>
            </div>
          </div>
        </div>
        <StyleForm />
      </div>
    </div>
  );
}

/* ---------- Display rule dialog ---------- */

const PageNew = ({ c }: { c: string }) => (
  <Svg w={16} h={18} c={c}><path d="M1 1H9L13 5V16H1Z" fill="#fcfcfc" stroke="#aaa" /><path d="M11 8V18M6 13H16" stroke="#569a2e" strokeWidth="3.500" /></Svg>
);

const Tick = ({ c = '' }: { c?: string }) => (
  <div className={`flex h-[14px] w-[14px] items-center justify-center border border-[#d0d0d0] bg-[#f3f3f3] ${c}`}>
    <Svg w={12} h={11}><path d="M1.500 5.500L4.500 8.500L10.500 2" stroke="#2a2a2a" strokeWidth="1.800" /></Svg>
  </div>
);

function RuleRow({ n, rule, bg, link = '', swatch, line, faded = '' }: { n: number; rule: string; bg: string; link?: string; swatch: string; line: string; faded?: string }) {
  return (
    <div className={`flex h-[35.800px] shrink-0 items-center ${bg}`}>
      <div className="w-[42px] text-right text-[13px] text-[#333]">{n}</div>
      <Tick c="ml-[14px]" />
      <div className={`ml-[27px] w-[222px] whitespace-nowrap text-[13px] tracking-[-0.170px] text-[#2238c8] ${link}`}>{rule}</div>
      <div className={`flex h-[31px] w-[74px] shrink-0 items-center justify-center border-2 bg-[#f3f3f3] ${swatch} ${faded}`}><div className={`h-[4px] w-[60px] ${line}`} /></div>
      <Svg w={12} h={12} c={`ml-[6px] ${faded}`}><path d="M6 .5V11.500M.5 6H11.500" stroke="#2a9a2a" strokeWidth="3.200" /></Svg>
      <Tick c="ml-[119px]" />
    </div>
  );
}

function RuleDialog() {
  return (
    <div className="absolute left-[466px] top-[246px] flex h-[217px] w-[815px] flex-col border border-[#6a6a6a] bg-[#f0f0f4] shadow-[2px_3px_10px_rgba(0,0,0,0.45)]">
      <div className="flex h-[34px] shrink-0 items-center bg-white pb-[2px] text-[14px] text-[#222]">
        <Svg w={18} h={18} c="ml-[7px]"><path d="M9 1L17 9L9 17L1 9Z" fill="#fff" stroke="#555" strokeWidth="1.500" /><path d="M9 4L14 9L9 14L4 9Z" fill="#e0e0e0" stroke="#999" /><path d="M6 10.500L8.500 8M9.500 9L12 7" stroke="#222" strokeWidth="2.500" /></Svg>
        <span className="ml-[5px]">显示规则</span>
        <div className="ml-auto mr-[40px] h-px w-[11px] bg-black" />
        <div className="mr-[41px] h-[11px] w-[11px] border border-[#ddd]" />
        <Close color="#111" s={12} c="mr-[21px]" />
      </div>
      <div className="flex h-0 flex-1">
        <div className="flex w-[208px] flex-col pl-[2px]">
          <div className="flex h-[38px] shrink-0 items-center border border-[#dcdce0] bg-[#f2f2f3] text-[13px] text-[#333]">
            <PageNew c="ml-[8px]" /><span className="ml-[4px]">新建</span>
            <Svg w={17} h={18} c="ml-[19px]"><path d="M1 1H8L11 4V13H1ZM6 5H12L16 9V17H6Z" fill="#fafafa" stroke="#aaa" /></Svg>
            <Svg w={19} h={19} c="ml-[15px]"><path d="M12 1H17L18 3V10H11V2Z" fill="#fff" stroke="#999" /><path d="M6 8V3H9" stroke="#777" strokeWidth="1.500" /><path d="M2 9H12L13 18H1Z" fill="#f0cd74" stroke="#d0993a" /><path d="M2 13H13" stroke="#b6852c" /></Svg>
            <RedX s={16} c="ml-[16px]" />
            <Svg w={8} h={8} c="ml-auto mr-[2px] mt-[18px]"><path d="M1 1H7" stroke="#777" strokeWidth="1.500" /><path d="M0 3H8L4 8Z" fill="#777" /></Svg>
          </div>
          <div className="mt-[6px] flex flex-1 flex-col border-l-2 border-[#a9bfe0] bg-white">
            <div className="flex h-[30px] shrink-0 items-start bg-[#2693fd] pl-[3px] text-[13px] font-bold leading-[31px] text-[#eaf5ff]">名称<Svg w={6} h={4} c="ml-auto mr-[5px] mt-[9px]"><path d="M0 4H6L3 0Z" fill="#cfe8ff" /></Svg></div>
            <div className="flex h-[26px] shrink-0 items-center pl-[8px] pt-[2px] text-[13px] text-[#444]">
              <Svg w={17} h={14}><path d="M1 5L9 1L16 4V9L8 13L1 9ZM1 5L8 8L16 4M8 8V13" fill="#eee" stroke="#666" strokeWidth="1.300" /></Svg><span className="ml-[5px]">FloorType</span>
            </div>
            <div className="flex h-[24px] shrink-0 items-center bg-[#cdd0de] pl-[8px] text-[13px] font-bold tracking-[-0.100px] text-[#222]">
              <Svg w={17} h={14}><path d="M1 5L9 1L16 4V8L8 12L1 9Z" fill="#b3d2f3" stroke="#94b9e4" /><path d="M2 5L9 8L16 4" stroke="#dfeefc" /></Svg><span className="ml-[5px]">Oil Tank Rule</span>
            </div>
          </div>
        </div>
        <div className="ml-[8px] flex w-[595px] flex-col">
          <div className="flex h-[38px] shrink-0 items-center border border-[#dcdce0] bg-[#f1f1f3] text-[13px] text-[#333]">
            <PageNew c="ml-[9px]" /><span className="ml-[4px]">新建</span>
            <Svg w={15} h={16} c="ml-[20px]"><path d="M6 3H12L14 5V14H5Z" fill="#eee" stroke="#aaa" /><circle cx="5" cy="4" r="3.500" fill="#e57032" /><path d="M1 9H8V15H1Z" fill="#f1b94e" stroke="#cc8b2a" /></Svg>
            <span className="ml-[7px]">生成</span>
            <Svg w={18} h={18} c="ml-[18px]"><path d="M3 2L14 14M14 2L4 14" stroke="#dadada" strokeWidth="2" /><circle cx="3" cy="15" r="2" stroke="#dcdcdc" /><circle cx="14" cy="15" r="2" stroke="#dcdcdc" /></Svg>
            <div className="ml-[15px] h-[24px] w-[20px] bg-[#f4f4f5]" />
            <div className="ml-[6px] flex h-[26px] w-[26px] items-center justify-center bg-[#f4f4f5]"><div className="h-[12px] w-[12px] rounded-[3px] bg-[#dedede]" /></div>
            <div className="ml-[8px] flex h-[26px] w-[26px] items-center justify-center bg-[#f6f6f7]"><Svg w={11} h={7}><path d="M1 6L5.500 2L10 6" stroke="#d4d4d4" strokeWidth="2" /></Svg></div>
            <div className="ml-[6px] flex h-[26px] w-[28px] items-center justify-center border-l border-[#ddd] bg-[#f6f6f7]"><Svg w={11} h={7}><path d="M1 1L5.500 5L10 1" stroke="#cacaca" strokeWidth="2.400" /></Svg></div>
            <div className="ml-[5px] flex h-[26px] w-[30px] items-center justify-center bg-[#f6f6f7]"><Svg w={12} h={10}><path d="M1 1L11 9M11 1L1 9" stroke="#d2d2d2" strokeWidth="2.400" /></Svg></div>
            <div className="ml-auto mr-[4px] mt-[18px] h-[4px] w-[5px] bg-[#d8d8dc]" />
          </div>
          <div className="mt-[6px] flex h-0 flex-1 flex-col overflow-hidden border-l-2 border-[#62a6ee] bg-white">
            <div className="flex h-[31px] shrink-0 items-center bg-[#f4f4f8] text-[13px] font-bold text-[#333]">
              <div className="flex h-full w-[45px] items-center border-r border-[#dedee4] pl-[11px]">#</div>
              <div className="flex h-full w-[46px] items-center border-r border-[#dedee4] pl-[10px]"><Svg w={12} h={11}><path d="M1.500 6L4.500 9L10.500 1.500" stroke="#444" strokeWidth="2" /></Svg></div>
              <div className="flex h-full w-[223px] items-center border-r border-[#dedee4] pl-[6px] font-medium">条件</div>
              <div className="flex h-full w-[167px] items-center border-r border-[#dedee4] pl-[5px] font-medium">操作</div>
              <div className="flex h-full items-center gap-[4px] whitespace-nowrap pl-[4px] font-medium"><span>若为</span><b>True</b><span>则停止</span></div>
            </div>
            <RuleRow n={1} rule="元素.Oil Tank.VolumeRate > 0.9000" bg="bg-[#c9def4]" link="underline" swatch="border-[#10b821]" line="bg-[#10d022]" />
            <RuleRow n={2} rule="元素.Oil Tank.VolumeRate > 0.5000" bg="bg-white" swatch="border-[#ece63a]" line="bg-[#ece63a]" />
            <RuleRow n={3} rule="元素 是 Oil Tank" bg="bg-white" swatch="border-black" line="bg-black" />
          </div>
        </div>
      </div>
      <div className="absolute left-[398px] top-[147px] flex h-[44px] w-[226px] flex-col whitespace-nowrap bg-white/55 pl-[4px] text-[13px] text-[#777]">
        <div className="h-[24px] leading-[26px]">单击以编辑条件:</div>
        <div className="h-[20px] font-bold leading-[21px] text-[#666]">元素.Oil Tank.VolumeRate &gt; 0.9000</div>
      </div>
      <Svg w={18} h={21} c="absolute left-[392px] top-[131px]"><path d="M6 13V2.500Q6 1 7.300 1Q8.600 1 8.600 2.500V8Q10 6.500 11.200 8.300Q12.700 7.500 13.700 9.200Q16 8.700 16.200 11V15L14 20H7L2 13Q1 10.500 3.500 11Z" fill="#fff" stroke="#444" strokeWidth="1.300" /><path d="M8.600 8V12M11.200 9V12.500M13.700 10V13" stroke="#777" /></Svg>
    </div>
  );
}

/* ---------- Input method bar ---------- */

function ImeBar() {
  return (
    <div className="absolute left-[1476px] top-[504px] flex h-[33px] w-[228px] items-center text-[#1c62c0]">
      <Svg w={32} h={33} c="z-10 mb-[3px]"><path d="M1 7L25 1Q28 1 29 4L32 25Q31 28 28 29L8 32Q5 32 4 28Z" fill="#ef5a1e" /><path d="M24 8Q8 8 8 13Q8 16 16 16Q25 16 25 20Q25 25 9 24" stroke="#fff" strokeWidth="4" /></Svg>
      <div className="-ml-[2px] flex h-[27px] flex-1 items-center bg-white">
        <div className="ml-[8px] w-[17px] text-[16px] font-bold leading-[20px]">中</div>
        <Svg w={14} h={14} c="ml-[9px]"><circle cx="3" cy="4" r="2" stroke="#1c62c0" strokeWidth="1.500" /><path d="M10 6Q14 6 12.500 10Q12 12 9 13.500Q11 10.500 9 9Q8 7 10 6Z" fill="#1c62c0" /></Svg>
        <Svg w={18} h={18} c="ml-[7px]"><circle cx="9" cy="9" r="8" stroke="#1c62c0" strokeWidth="1.600" /><path d="M5 10Q9 15.500 13 10M6.500 5V8M11.500 5V8" stroke="#1c62c0" strokeWidth="1.600" /></Svg>
        <Svg w={14} h={17} c="ml-[9px]"><rect x="4" y="0" width="6" height="10" rx="3" fill="#1c62c0" /><path d="M1 7Q1 12 7 12Q13 12 13 7M7 12V16M3 16H11" stroke="#1c62c0" strokeWidth="1.600" /></Svg>
        <Svg w={18} h={15} c="ml-[8px]"><rect x="1" y="1" width="16" height="13" rx="1" fill="#dbe8f8" stroke="#1c62c0" strokeWidth="1.500" /><path d="M3 4.500H15M3 7.500H15" stroke="#1c62c0" strokeWidth="1.600" strokeDasharray="1.800 1" /><path d="M4 11H14" stroke="#1c62c0" strokeWidth="1.600" /></Svg>
        <Svg w={18} h={16} c="ml-[9px]"><circle cx="7" cy="4" r="3.300" fill="#bbb" /><path d="M0 15Q1 8 8 8V15Z" fill="#bbb" /><path d="M8 9H18M8 12H16M7 15H18M13 9V15" stroke="#aaa" /></Svg>
        <Svg w={16} h={16} c="ml-[5px]"><path d="M5 1Q8 3.500 11 1L16 4L14 8L12.500 7V15.500H3.500V7L2 8L0 4Z" fill="#1c62c0" /></Svg>
        <Svg w={15} h={15} c="ml-[7px]"><path d="M0 0H7V7H0ZM0 8.500H7V15H0ZM8.500 8.500H15V15H8.500Z" fill="#1c62c0" /><rect x="9.200" y=".8" width="5" height="5" stroke="#1c62c0" strokeWidth="1.500" /></Svg>
      </div>
    </div>
  );
}

export default function App() {
  return (
    <div className="relative flex h-[921px] w-[1704px] flex-col overflow-hidden bg-[#f0f0f0] [font-family:'Noto_Sans','Noto_Sans_CJK_SC',sans-serif]">
      <TitleBar />
      <Tabs />
      <Ribbon />
      <View />
      <NavBar />
      <StatusBar />

      {/* docked panel behind the dialogs */}
      <div className="absolute left-[1440px] top-[442px] flex h-[407px] w-[264px] flex-col border-t border-[#888] bg-[#f0f0f0]">
        <div className="h-[34px] bg-white" />
        <div className="h-[67px] border-b border-[#ddd] bg-[#eeeeee]" />
        <div className="mt-auto h-[16px] border-t-2 border-white" />
      </div>
      <div className="absolute left-[1419px] top-[246px] flex h-[83px] w-[148px] flex-col bg-[#f2f2f2]">
        <div className="flex h-[32px] items-center justify-end bg-white pr-[21px]"><Close color="#999" s={12} sw={1} /></div>
        <div className="flex flex-1 items-center justify-end pb-[2px] pr-[18px]">
          <div className="flex h-[21px] w-[60px] items-center justify-end border border-[#adadad] bg-[#e4e4e4] pr-[6px]"><Tri fill="#000" /></div>
          <Svg w={15} h={3} c="ml-[14px] mt-[8px]"><path d="M1 0H3V2.500H1ZM6.500 0H8.500V2.500H6.500ZM12 0H14V2.500H12Z" fill="#222" /></Svg>
        </div>
      </div>
      <StyleDialog />
      <RuleDialog />
      <ImeBar />
    </div>
  );
}
